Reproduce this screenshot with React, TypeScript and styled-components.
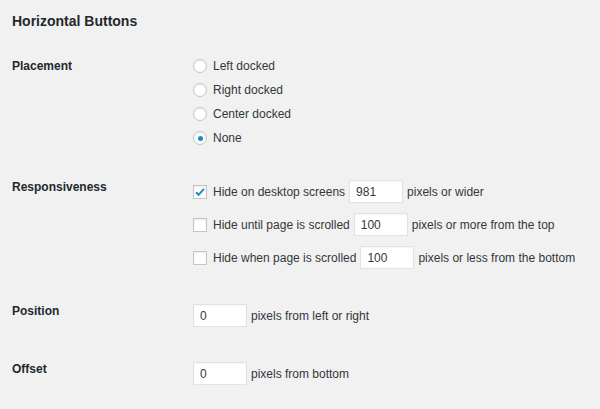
import styled, { createGlobalStyle } from 'styled-components';

const GlobalStyle = createGlobalStyle`
  html, body {
    margin: 0;
    padding: 0;
    background: #f1f1f1;
  }
  body {
    font-family: "Liberation Sans", Arial, sans-serif;
    font-size: 12px;
    color: #32373c;
  }
`;

const Page = styled.div`
  padding: 12px 0 0 12px;
  width: 600px;
  height: 409px;
  box-sizing: border-box;
  overflow: hidden;
`;

const Title = styled.h2`
  margin: 0 0 29px;
  font-size: 14px;
  line-height: 18px;
  font-weight: 700;
  color: #23282d;
`;

const Sections = styled.div`
  display: flex;
  flex-direction: column;
  gap: 35px;
`;

const Section = styled.div`
  display: flex;
  align-items: flex-start;
`;

const Label = styled.div`
  width: 181px;
  flex-shrink: 0;
  font-weight: 700;
  line-height: 14px;
  color: #23282d;
`;

const Options = styled.div<{ $gap: number }>`
  display: flex;
  flex-direction: column;
  gap: ${({ $gap }) => $gap}px;
`;

const Option = styled.div`
  display: flex;
  align-items: center;
  gap: 5px;
  min-height: 14px;
  line-height: 14px;
  white-space: nowrap;
`;

const Radio = styled.span<{ $checked?: boolean }>`
  position: relative;
  width: 14px;
  height: 14px;
  box-sizing: border-box;
  border-radius: 50%;
  border: 1px solid #c3c6c9;
  background: #fff;
  box-shadow: inset 0 1px 2px rgba(0, 0, 0, 0.08);
  margin-right: 1px;
  flex-shrink: 0;

  &::before {
    content: '';
    display: ${({ $checked }) => ($checked ? 'block' : 'none')};
    position: absolute;
    left: 50%;
    top: 50%;
    width: 5px;
    height: 5px;
    margin: -2.5px 0 0 -2.5px;
    border-radius: 50%;
    background: #1e8cbe;
  }
`;

const Check = styled.span`
  display: flex;
  align-items: center;
  justify-content: center;
  width: 14px;
  height: 14px;
  box-sizing: border-box;
  border: 1px solid #c3c6c9;
  background: #fff;
  box-shadow: inset 0 1px 2px rgba(0, 0, 0, 0.08);
  margin-right: 1px;
  flex-shrink: 0;
`;

const NumberBox = styled.span`
  display: inline-flex;
  align-items: center;
  width: 54px;
  height: 23px;
  box-sizing: border-box;
  padding-left: 6px;
  margin: 0 -1px;
  border: 1px solid #e2e2e2;
  background: #fff;
  box-shadow: inset 0 1px 2px rgba(0, 0, 0, 0.04);
  color: #32373c;
`;

const CheckRow = styled(Option)`
  min-height: 23px;
`;

const InputRow = styled(Option)`
  min-height: 23px;
  margin-left: 1px;
`;

const CheckMark = () => (
  <svg width="12" height="12" viewBox="0 0 12 12">
    <path d="M2 6.2 L4.6 8.8 L10 2.8" fill="none" stroke="#1e8cbe" strokeWidth="2" />
  </svg>
);

const placements = ['Left docked', 'Right docked', 'Center docked', 'None'];

const responsive = [
  { checked: true, before: 'Hide on desktop screens', value: '981', after: 'pixels or wider' },
  { checked: false, before: 'Hide until page is scrolled', value: '100', after: 'pixels or more from the top' },
  { checked: false, before: 'Hide when page is scrolled', value: '100', after: 'pixels or less from the bottom' },
];

const App = () => (
  <>
    <GlobalStyle />
    <Page>
      <Title>Horizontal Buttons</Title>
      <Sections>
        <Section>
          <Label>Placement</Label>
          <Options $gap={10}>
            {placements.map((p) => (
              <Option key={p}>
                <Radio $checked={p === 'None'} />
                {p}
              </Option>
            ))}
          </Options>
        </Section>
        <Section>
          <Label>Responsiveness</Label>
          <Options $gap={10}>
            {responsive.map((r) => (
              <CheckRow key={r.before}>
                <Check>{r.checked && <CheckMark />}</Check>
                {r.before}
                <NumberBox>{r.value}</NumberBox>
                {r.after}
              </CheckRow>
            ))}
          </Options>
        </Section>
        <Section>
          <Label>Position</Label>
          <InputRow>
            <NumberBox>0</NumberBox>
            pixels from left or right
          </InputRow>
        </Section>
        <Section>
          <Label>Offset</Label>
          <InputRow>
            <NumberBox>0</NumberBox>
            pixels from bottom
          </InputRow>
        </Section>
      </Sections>
    </Page>
  </>
);

export default App;
